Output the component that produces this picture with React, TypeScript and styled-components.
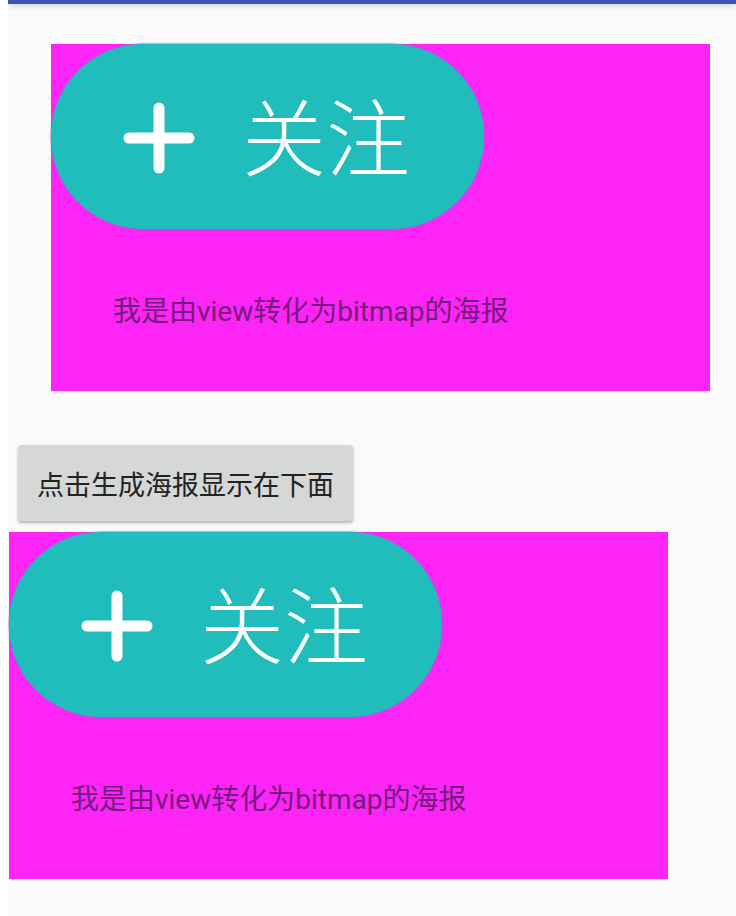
import React from "react";
import styled, { createGlobalStyle } from "styled-components";

const Global = createGlobalStyle`
  html, body { margin: 0; padding: 0; background: #ffffff; }
  body { font-family: "Roboto", "Noto Sans CJK SC", sans-serif; }
  #root { min-height: 916px; }
`;

const Screen = styled.div`
  margin-left: 8px;
  min-height: 916px;
  background: #fafafa;
  display: flex;
  flex-direction: column;
  align-items: flex-start;
  overflow: hidden;
`;

const TopBar = styled.div`
  align-self: stretch;
  height: 4px;
  background: #3f51b5;
  box-shadow: 0 2px 5px rgba(0, 0, 0, 0.18);
`;

const Poster = styled.div<{ $left: number; $top: number }>`
  margin-left: ${(p) => p.$left}px;
  margin-top: ${(p) => p.$top}px;
  width: 659px;
  height: 347px;
  background: #fd24f6;
  display: flex;
  flex-direction: column;
  align-items: flex-start;
`;

const FollowPill = styled.div`
  width: 433px;
  height: 185px;
  border-radius: 92.5px;
  background: #20bdbc;
  box-shadow: 0 0 1.5px 0.5px #8f6fd9;
  display: flex;
  align-items: center;
  padding-left: 72px;
  box-sizing: border-box;
  color: #ffffff;
`;

const PlusIcon = styled.svg`
  width: 72px;
  height: 72px;
  flex: none;
  margin-right: 47px;
  margin-top: 2px;
`;

const FollowText = styled.span`
  font-family: "Noto Sans CJK SC", sans-serif;
  font-size: 84px;
  line-height: 1;
  font-weight: 300;
  letter-spacing: 0;
  margin-top: -6px;
`;

const Caption = styled.div`
  margin-top: 66px;
  margin-left: 62px;
  font-family: "Roboto", "Noto Sans CJK SC", sans-serif;
  font-size: 28px;
  line-height: 34px;
  color: #731c7d;
`;

const ActionButton = styled.button`
  margin-left: 10px;
  margin-top: 54px;
  width: 335px;
  height: 76px;
  border: none;
  border-radius: 3px;
  background: #d6d7d7;
  box-shadow: 0 2px 3px rgba(0, 0, 0, 0.28);
  font-family: "Noto Sans CJK SC", sans-serif;
  font-size: 27px;
  color: #222222;
  padding: 0;
  display: flex;
  align-items: center;
  justify-content: center;
  cursor: pointer;
`;

const PosterCard: React.FC<{ left: number; top: number }> = ({ left, top }) => (
  <Poster $left={left} $top={top}>
    <FollowPill>
      <PlusIcon viewBox="0 0 72 72">
        <line x1="36" y1="6" x2="36" y2="66" stroke="#fff" strokeWidth="11" strokeLinecap="round" />
        <line x1="6" y1="36" x2="66" y2="36" stroke="#fff" strokeWidth="11" strokeLinecap="round" />
      </PlusIcon>
      <FollowText>关注</FollowText>
    </FollowPill>
    <Caption>我是由view转化为bitmap的海报</Caption>
  </Poster>
);

export default function App() {
  return (
    <>
      <Global />
      <Screen>
        <TopBar />
        <PosterCard left={43} top={40} />
        <ActionButton>点击生成海报显示在下面</ActionButton>
        <PosterCard left={1} top={11} />
      </Screen>
    </>
  );
}
